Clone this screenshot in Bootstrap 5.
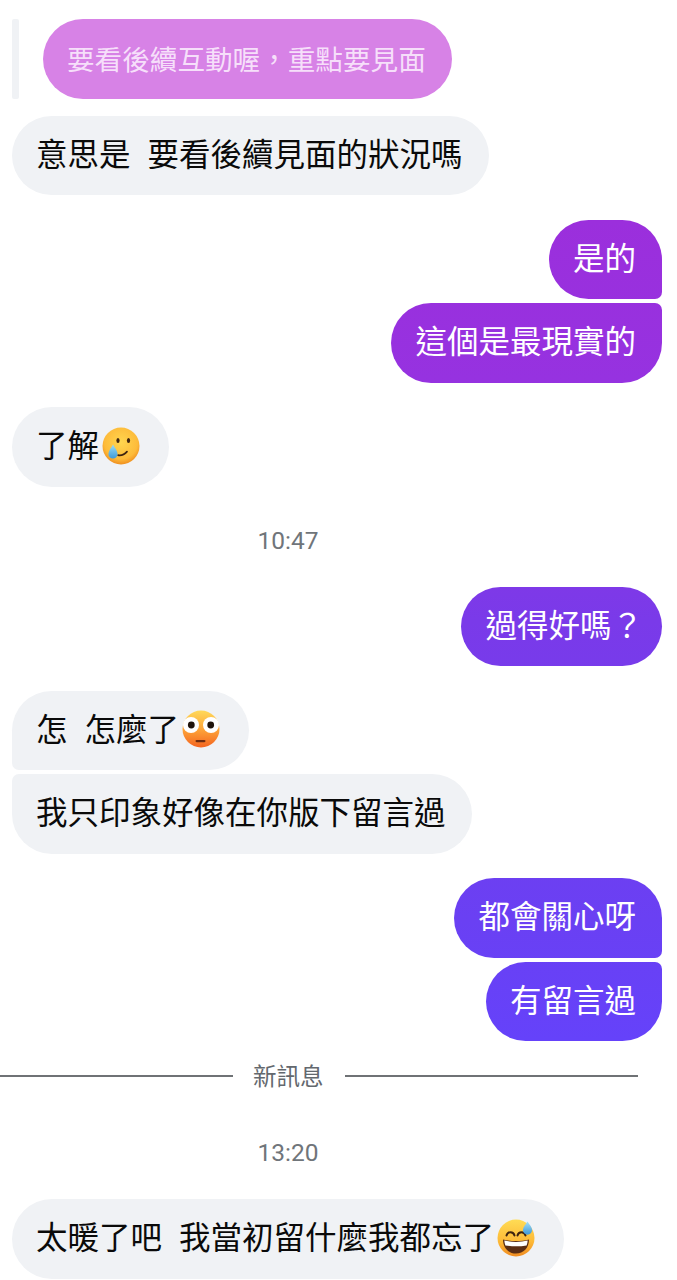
<!DOCTYPE html>
<html lang="zh-Hant">
<head>
    <meta charset="UTF-8">
    <meta name="viewport" content="width=device-width, initial-scale=1.0">
    <title>Chat</title>
    <link href="https://cdn.jsdelivr.net/npm/bootstrap@5.3.2/dist/css/bootstrap.min.css" rel="stylesheet">
    <style>
        body {
            width: 677px;
            height: 1280px;
            overflow: hidden;
            background: #fff;
            font-family: "Noto Sans CJK TC", "Noto Sans", sans-serif;
        }

        .chat-thread {
            padding: 19px 15px 0 12px;
        }

        /* Message bubbles */
        .chat-bubble {
            height: 79.5px;
            padding: 0 26px 0 24px;
            border-radius: 40px;
            font-size: 31.5px;
            line-height: 73px;
            word-spacing: 1.5px;
            white-space: pre;
        }

        .chat-bubble svg {
            width: 38px;
            height: 38px;
            margin: 0 3px 0 3px;
            vertical-align: -7.5px;
        }

        .bubble-in {
            background: #f0f2f5;
            color: #0a0a0a;
        }

        /* Sent bubbles share one gradient over the whole window */
        .bubble-out {
            background: linear-gradient(180deg, #9b2fdc 220px, #9632e0 380px, #7a3ae9 620px, #6a40f3 920px, #6542fa 1040px) fixed;
            color: #fff;
        }

        .bubble-reply {
            background: #d782e6;
            color: #f6dffa;
            font-size: 27.6px;
            line-height: 79px;
        }

        .reply-bar {
            width: 7px;
            background: #f0f2f5;
            margin-right: 24px;
            border-radius: 2px;
        }

        .tight-mark {
            letter-spacing: -7px;
        }

        .corner-br { border-bottom-right-radius: 7px; }
        .corner-tr { border-top-right-radius: 7px; }
        .corner-bl { border-bottom-left-radius: 7px; }
        .corner-tl { border-top-left-radius: 7px; }

        /* Timestamps and the new messages divider */
        .chat-time {
            height: 34px;
            line-height: 34px;
            margin: 37px -15px 29px -12px;
            padding-right: 101px;
            font-family: Roboto, sans-serif;
            font-size: 24.5px;
            color: #70757a;
            text-align: center;
        }

        .chat-divider {
            height: 34px;
            margin: 18px 24px 0 -12px;
            font-size: 23.5px;
            color: #63686e;
        }

        .chat-divider hr {
            flex: 1;
            margin: 0;
            border: 0;
            height: 2px;
            opacity: 1;
            background: #6f7275;
        }

        .chat-divider hr:first-child {
            flex: 0 0 233px;
        }

        .chat-divider span {
            padding: 0 21px 0 20px;
        }

        .gap-group { margin-top: 4px; }
        .gap-reply { margin-top: 17px; }
        .gap-turn { margin-top: 24.5px; }
        .gap-time { margin-top: 43px; }
    </style>
</head>
<body>
    <main class="chat-thread d-flex flex-column">
        <!-- Quoted reply -->
        <div class="d-flex align-self-start">
            <div class="reply-bar"></div>
            <div class="chat-bubble bubble-reply">要看後續互動喔，重點要見面</div>
        </div>
        <div class="chat-bubble bubble-in align-self-start gap-reply">意思是  要看後續見面的狀況嗎</div>

        <div class="chat-bubble bubble-out align-self-end corner-br gap-turn">是的</div>
        <div class="chat-bubble bubble-out align-self-end corner-tr gap-group">這個是最現實的</div>

        <div class="chat-bubble bubble-in align-self-start gap-turn">了解<svg viewBox="0 0 38 38">
                <defs>
                    <radialGradient id="faceTear" cx="50%" cy="40%" r="60%">
                        <stop offset="0" stop-color="#ffd64f"/>
                        <stop offset="0.75" stop-color="#fdbb3a"/>
                        <stop offset="1" stop-color="#ef8f1f"/>
                    </radialGradient>
                    <linearGradient id="dropTear" x1="0" y1="0" x2="0" y2="1">
                        <stop offset="0" stop-color="#9adcf5"/>
                        <stop offset="1" stop-color="#3f9bd8"/>
                    </linearGradient>
                </defs>
                <circle cx="19" cy="19" r="18.5" fill="url(#faceTear)"/>
                <ellipse cx="16" cy="13.5" rx="1.6" ry="2.6" fill="#3e2410"/>
                <ellipse cx="26.5" cy="13.5" rx="1.6" ry="2.6" fill="#3e2410"/>
                <path d="M16 28.2c3.4.6 6.6-.8 9-3.6" fill="none" stroke="#3e2410" stroke-width="1.7" stroke-linecap="round"/>
                <path d="M11 17.5c1.8 3.4 4.6 6.4 4.6 9.4a4.6 4.6 0 0 1-9.2 0c0-3 2.8-6 4.6-9.4z" fill="url(#dropTear)"/>
            </svg></div>

        <div class="chat-time">10:47</div>

        <div class="chat-bubble bubble-out align-self-end">過得好嗎<span class="tight-mark">？</span></div>

        <div class="chat-bubble bubble-in align-self-start corner-bl gap-turn">怎  怎麼了<svg viewBox="0 0 38 38">
                <defs>
                    <linearGradient id="faceFlush" x1="0" y1="0" x2="0" y2="1">
                        <stop offset="0" stop-color="#ffd95a"/>
                        <stop offset="0.5" stop-color="#fda63a"/>
                        <stop offset="1" stop-color="#f4641f"/>
                    </linearGradient>
                </defs>
                <circle cx="19" cy="19" r="18.5" fill="url(#faceFlush)"/>
                <circle cx="9" cy="15" r="8" fill="#fff"/>
                <circle cx="29" cy="15" r="8" fill="#fff"/>
                <circle cx="9.300" cy="15" r="3.4" fill="#1f130b"/>
                <circle cx="28.700" cy="15" r="3.4" fill="#1f130b"/>
                <rect x="13.5" y="30" width="10" height="2.2" rx="1.1" fill="#6e2c10"/>
            </svg></div>
        <div class="chat-bubble bubble-in align-self-start corner-tl gap-group">我只印象好像在你版下留言過</div>

        <div class="chat-bubble bubble-out align-self-end corner-br gap-turn">都會關心呀</div>
        <div class="chat-bubble bubble-out align-self-end corner-tr gap-group">有留言過</div>

        <div class="chat-divider d-flex align-items-center">
            <hr>
            <span>新訊息</span>
            <hr>
        </div>

        <div class="chat-time gap-time">13:20</div>

        <div class="chat-bubble bubble-in align-self-start">太暖了吧  我當初留什麼我都忘了<svg viewBox="0 0 38 38">
                <defs>
                    <linearGradient id="faceSweat" x1="0" y1="0" x2="0" y2="1">
                        <stop offset="0" stop-color="#ffdc55"/>
                        <stop offset="0.6" stop-color="#fdb936"/>
                        <stop offset="1" stop-color="#f08c22"/>
                    </linearGradient>
                    <linearGradient id="dropSweat" x1="0" y1="0" x2="0" y2="1">
                        <stop offset="0" stop-color="#a5e0f7"/>
                        <stop offset="1" stop-color="#3d97d8"/>
                    </linearGradient>
                </defs>
                <circle cx="19" cy="19" r="18.5" fill="url(#faceSweat)"/>
                <path d="M9.500 16.500c1-4.400 7-4.400 8 0M20.500 16.500c1-4.400 7-4.400 8 0" fill="none" stroke="#3e2410" stroke-width="2" stroke-linecap="round"/>
                <path d="M6 20.500c8 2 18 2 26 0 0 8.500-5.500 14-13 14S6 29 6 20.500z" fill="#5a2d14"/>
                <path d="M7.300 21.600c7 1.700 16.400 1.700 23.400 0-.1 1.800-.5 3.400-1.100 4.800-6.800 1.200-14.400 1.200-21.200 0-.6-1.400-1-3-1.100-4.800z" fill="#fff"/>
                <path d="M30.500 2.500c1.800 3.200 4.600 5.600 4.600 8.600a4.600 4.600 0 0 1-9.200 0c0-3 2.800-5.400 4.600-8.600z" fill="url(#dropSweat)"/>
            </svg></div>
    </main>
    <script src="https://cdn.jsdelivr.net/npm/bootstrap@5.3.2/dist/js/bootstrap.bundle.min.js"></script>
</body>
</html>
